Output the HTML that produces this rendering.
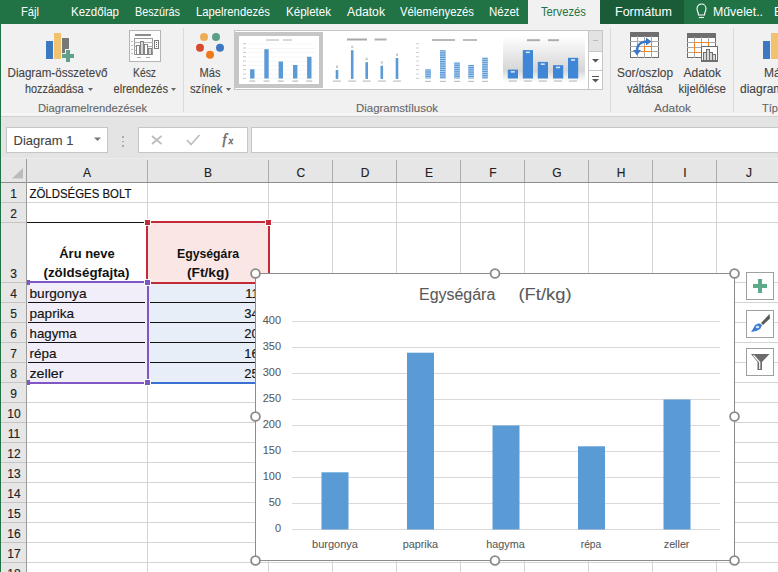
<!DOCTYPE html>
<html><head><meta charset="utf-8">
<style>
html,body{margin:0;padding:0;width:778px;height:572px;overflow:hidden;background:#fff}
svg{display:block;font-family:"Liberation Sans",sans-serif}
</style></head><body>
<svg width="778" height="572" viewBox="0 0 778 572" shape-rendering="crispEdges">
<rect x="0" y="0" width="778" height="24" fill="#217346"/>
<rect x="528" y="0" width="72" height="24" fill="#f1f1f1"/>
<rect x="600" y="0" width="84" height="24" fill="#1a5c37"/>
<text x="21" y="16" font-size="12" fill="#fff" textLength="18" lengthAdjust="spacingAndGlyphs">Fájl</text>
<text x="71" y="16" font-size="12" fill="#fff" textLength="48" lengthAdjust="spacingAndGlyphs">Kezdőlap</text>
<text x="135" y="16" font-size="12" fill="#fff" textLength="45" lengthAdjust="spacingAndGlyphs">Beszúrás</text>
<text x="196" y="16" font-size="12" fill="#fff" textLength="74" lengthAdjust="spacingAndGlyphs">Lapelrendezés</text>
<text x="286" y="16" font-size="12" fill="#fff" textLength="45" lengthAdjust="spacingAndGlyphs">Képletek</text>
<text x="347" y="16" font-size="12" fill="#fff" textLength="38" lengthAdjust="spacingAndGlyphs">Adatok</text>
<text x="400" y="16" font-size="12" fill="#fff" textLength="74" lengthAdjust="spacingAndGlyphs">Véleményezés</text>
<text x="489" y="16" font-size="12" fill="#fff" textLength="30" lengthAdjust="spacingAndGlyphs">Nézet</text>
<text x="615" y="16" font-size="12" fill="#fff" textLength="57" lengthAdjust="spacingAndGlyphs">Formátum</text>
<text x="713" y="16" font-size="12" fill="#fff" textLength="50" lengthAdjust="spacingAndGlyphs">Művelet..</text>
<text x="774" y="16" font-size="12" fill="#fff">B</text>
<text x="541" y="16" font-size="12" fill="#217346" textLength="45" lengthAdjust="spacingAndGlyphs">Tervezés</text>
<g fill="none" stroke="#fff" stroke-width="1.1" shape-rendering="geometricPrecision"><path d="M698.5,15 C698.5,12 697,11 697,8.5 A4.5,4.5 0 0 1 706,8.5 C706,11 704.5,12 704.5,15 Z"/><path d="M699,17.5 H704"/></g>
<rect x="0" y="24" width="778" height="92" fill="#f1f1f1"/>
<rect x="0" y="113" width="778" height="2" fill="#f6f6f6"/>
<rect x="183" y="28" width="1" height="84" fill="#dadada"/>
<rect x="610" y="28" width="1" height="84" fill="#dadada"/>
<rect x="733" y="28" width="1" height="84" fill="#dadada"/>
<rect x="46" y="41" width="7" height="18" fill="#3d79c2"/>
<rect x="54" y="33" width="7" height="26" fill="#f2c36f"/>
<rect x="62" y="38" width="7" height="15" fill="#787878"/>
<path d="M65,49 h5 v4 h4 v5 h-4 v4 h-5 v-4 h-4 v-5 h4 z" fill="#f1f1f1"/>
<path d="M66,50 h4 v4 h4 v4 h-4 v4 h-4 v-4 h-4 v-4 h4 z" fill="#62a189"/>
<text x="7.5" y="76.5" font-size="12" fill="#444" textLength="100" lengthAdjust="spacingAndGlyphs" stroke="#444" stroke-width="0.1">Diagram-összetevő</text>
<text x="25" y="92.5" font-size="12" fill="#444" textLength="58.5" lengthAdjust="spacingAndGlyphs" stroke="#444" stroke-width="0.1">hozzáadása</text>
<path d="M88,88 h5 l-2.5,3 z" fill="#666" shape-rendering="geometricPrecision"/>
<text x="38" y="112" font-size="11" fill="#666" textLength="109" lengthAdjust="spacingAndGlyphs" stroke="#666" stroke-width="0.1">Diagramelrendezések</text>
<g shape-rendering="crispEdges">
<rect x="129.5" y="30.5" width="31" height="31" fill="#fdfdfd" stroke="#b4b4b4"/>
<rect x="135" y="34" width="16" height="2" fill="#8c8c8c"/>
<rect x="134.5" y="38.5" width="18" height="16" fill="none" stroke="#9a9a9a"/>
<line x1="134" y1="42.5" x2="153" y2="42.5" stroke="#b0b0b0"/>
<line x1="134" y1="46.5" x2="153" y2="46.5" stroke="#b0b0b0"/>
<line x1="134" y1="50.5" x2="153" y2="50.5" stroke="#b0b0b0"/>
<rect x="136.5" y="45.5" width="3" height="9" fill="#fff" stroke="#858585"/>
<rect x="140.0" y="41.5" width="3" height="13" fill="#d6d6d6" stroke="#858585"/>
<rect x="144.5" y="44.5" width="3" height="10" fill="#fff" stroke="#858585"/>
<rect x="148.5" y="48.5" width="3" height="6" fill="#d6d6d6" stroke="#858585"/>
<rect x="154.5" y="40.5" width="4" height="8" fill="#fff" stroke="#7a7a7a"/>
<rect x="156" y="42" width="1" height="1" fill="#666"/>
<rect x="156" y="44" width="1" height="1" fill="#666"/>
<rect x="156" y="46" width="1" height="1" fill="#666"/>
<rect x="131" y="41" width="2" height="1" fill="#bbb"/>
<rect x="131" y="45" width="2" height="1" fill="#bbb"/>
<rect x="131" y="49" width="2" height="1" fill="#bbb"/>
<rect x="131" y="53" width="2" height="1" fill="#bbb"/>
<rect x="137" y="57" width="4" height="1" fill="#aaa"/><rect x="146" y="57" width="4" height="1" fill="#aaa"/>
</g>
<text x="133" y="76.5" font-size="12" fill="#444" textLength="23" lengthAdjust="spacingAndGlyphs" stroke="#444" stroke-width="0.1">Kész</text>
<text x="113.5" y="92.5" font-size="12" fill="#444" textLength="54.5" lengthAdjust="spacingAndGlyphs" stroke="#444" stroke-width="0.1">elrendezés</text>
<path d="M171,88 h5 l-2.5,3 z" fill="#666" shape-rendering="geometricPrecision"/>
<g shape-rendering="geometricPrecision">
<circle cx="204" cy="37" r="4" fill="#efae55"/>
<circle cx="216" cy="37" r="4" fill="#5b9e86"/>
<circle cx="200" cy="47.7" r="4" fill="#d74a2b"/>
<circle cx="220" cy="47.7" r="4" fill="#3d78c2"/>
<circle cx="210" cy="54.7" r="4" fill="#ef7a1c"/>
</g>
<text x="199.5" y="76.5" font-size="12" fill="#444" textLength="21" lengthAdjust="spacingAndGlyphs" stroke="#444" stroke-width="0.1">Más</text>
<text x="190" y="92.5" font-size="12" fill="#444" textLength="32.5" lengthAdjust="spacingAndGlyphs" stroke="#444" stroke-width="0.1">színek</text>
<path d="M226,88 h5 l-2.5,3 z" fill="#666" shape-rendering="geometricPrecision"/>
<text x="356" y="112" font-size="11" fill="#666" textLength="82" lengthAdjust="spacingAndGlyphs" stroke="#666" stroke-width="0.1">Diagramstílusok</text>
<rect x="234.5" y="30.5" width="368" height="59" fill="#fff" stroke="#c6c6c6"/>
<rect x="235" y="32" width="88" height="56" fill="#c6c6c6"/>
<rect x="239" y="36" width="80" height="48" fill="#fff"/>
<g shape-rendering="geometricPrecision">
<rect x="266" y="39.2" width="13" height="1.6" fill="#cfcfcf"/><rect x="283" y="39.2" width="9" height="1.6" fill="#cfcfcf"/>
<rect x="248" y="78.5" width="66" height="0.4" fill="#e8e8e8"/>
<rect x="243" y="77.9" width="3" height="1" fill="#c8c8c8"/>
<rect x="248" y="74.2" width="66" height="0.4" fill="#e8e8e8"/>
<rect x="243" y="73.6" width="3" height="1" fill="#c8c8c8"/>
<rect x="248" y="69.8" width="66" height="0.4" fill="#e8e8e8"/>
<rect x="243" y="69.2" width="3" height="1" fill="#c8c8c8"/>
<rect x="248" y="65.5" width="66" height="0.4" fill="#e8e8e8"/>
<rect x="243" y="64.9" width="3" height="1" fill="#c8c8c8"/>
<rect x="248" y="61.1" width="66" height="0.4" fill="#e8e8e8"/>
<rect x="243" y="60.5" width="3" height="1" fill="#c8c8c8"/>
<rect x="248" y="56.8" width="66" height="0.4" fill="#e8e8e8"/>
<rect x="243" y="56.2" width="3" height="1" fill="#c8c8c8"/>
<rect x="248" y="52.5" width="66" height="0.4" fill="#e8e8e8"/>
<rect x="243" y="51.9" width="3" height="1" fill="#c8c8c8"/>
<rect x="248" y="48.1" width="66" height="0.4" fill="#e8e8e8"/>
<rect x="243" y="47.5" width="3" height="1" fill="#c8c8c8"/>
<rect x="248" y="43.8" width="66" height="0.4" fill="#e8e8e8"/>
<rect x="243" y="43.2" width="3" height="1" fill="#c8c8c8"/>
<rect x="250.1" y="69.3" width="4.4" height="9.2" fill="#5b9bd5"/>
<rect x="249.3" y="80.5" width="6" height="1.2" fill="#bdbdbd"/>
<rect x="264.3" y="49.2" width="4.4" height="29.3" fill="#5b9bd5"/>
<rect x="263.5" y="80.5" width="6" height="1.2" fill="#bdbdbd"/>
<rect x="278.6" y="61.5" width="4.4" height="17.0" fill="#5b9bd5"/>
<rect x="277.8" y="80.5" width="6" height="1.2" fill="#bdbdbd"/>
<rect x="293.0" y="65" width="4.4" height="13.5" fill="#5b9bd5"/>
<rect x="292.2" y="80.5" width="6" height="1.2" fill="#bdbdbd"/>
<rect x="307.1" y="56.8" width="4.4" height="21.7" fill="#5b9bd5"/>
<rect x="306.3" y="80.5" width="6" height="1.2" fill="#bdbdbd"/>
<rect x="347" y="38.5" width="20" height="2" fill="#a8a8a8"/><rect x="374.5" y="38.5" width="12" height="2" fill="#b0b0b0"/>
<rect x="335.7" y="70" width="2.6" height="8.9" fill="#5b9bd5"/>
<rect x="336.0" y="65.5" width="2" height="2.5" fill="#c8c8c8"/>
<rect x="333.0" y="80.5" width="8" height="1.2" fill="#c0c0c0"/>
<rect x="350.9" y="50.2" width="2.6" height="28.7" fill="#5b9bd5"/>
<rect x="351.2" y="45.7" width="2" height="2.5" fill="#c8c8c8"/>
<rect x="348.2" y="80.5" width="8" height="1.2" fill="#c0c0c0"/>
<rect x="365.4" y="62.2" width="2.6" height="16.7" fill="#5b9bd5"/>
<rect x="365.7" y="57.7" width="2" height="2.5" fill="#c8c8c8"/>
<rect x="362.7" y="80.5" width="8" height="1.2" fill="#c0c0c0"/>
<rect x="380.5" y="65.7" width="2.6" height="13.2" fill="#5b9bd5"/>
<rect x="380.8" y="61.2" width="2" height="2.5" fill="#c8c8c8"/>
<rect x="377.8" y="80.5" width="8" height="1.2" fill="#c0c0c0"/>
<rect x="395.7" y="58" width="2.6" height="20.9" fill="#5b9bd5"/>
<rect x="396.0" y="53.5" width="2" height="2.5" fill="#c8c8c8"/>
<rect x="393.0" y="80.5" width="8" height="1.2" fill="#c0c0c0"/>
<rect x="432" y="39" width="23" height="2" fill="#b8b8b8"/><rect x="463" y="39" width="14" height="2" fill="#bcbcbc"/>
<rect x="416" y="77.9" width="3" height="1" fill="#cfcfcf"/>
<rect x="416" y="73.6" width="3" height="1" fill="#cfcfcf"/>
<rect x="416" y="69.2" width="3" height="1" fill="#cfcfcf"/>
<rect x="416" y="64.9" width="3" height="1" fill="#cfcfcf"/>
<rect x="416" y="60.5" width="3" height="1" fill="#cfcfcf"/>
<rect x="416" y="56.2" width="3" height="1" fill="#cfcfcf"/>
<rect x="416" y="51.9" width="3" height="1" fill="#cfcfcf"/>
<rect x="416" y="47.5" width="3" height="1" fill="#cfcfcf"/>
<rect x="416" y="43.2" width="3" height="1" fill="#cfcfcf"/>
<rect x="425.3" y="69.3" width="5.6" height="9.2" fill="#5b9bd5"/>
<rect x="425.3" y="70.5" width="5.6" height="0.8" fill="#c5dcf2"/>
<rect x="425.3" y="72.7" width="5.6" height="0.8" fill="#c5dcf2"/>
<rect x="425.3" y="74.9" width="5.6" height="0.8" fill="#c5dcf2"/>
<rect x="425.3" y="77.1" width="5.6" height="0.8" fill="#c5dcf2"/>
<rect x="425.1" y="80.8" width="6" height="1.2" fill="#c0c0c0"/>
<rect x="440.0" y="50.2" width="5.6" height="28.3" fill="#5b9bd5"/>
<rect x="440.0" y="51.4" width="5.6" height="0.8" fill="#c5dcf2"/>
<rect x="440.0" y="53.6" width="5.6" height="0.8" fill="#c5dcf2"/>
<rect x="440.0" y="55.8" width="5.6" height="0.8" fill="#c5dcf2"/>
<rect x="440.0" y="58.0" width="5.6" height="0.8" fill="#c5dcf2"/>
<rect x="440.0" y="60.2" width="5.6" height="0.8" fill="#c5dcf2"/>
<rect x="440.0" y="62.4" width="5.6" height="0.8" fill="#c5dcf2"/>
<rect x="440.0" y="64.6" width="5.6" height="0.8" fill="#c5dcf2"/>
<rect x="440.0" y="66.8" width="5.6" height="0.8" fill="#c5dcf2"/>
<rect x="440.0" y="69.0" width="5.6" height="0.8" fill="#c5dcf2"/>
<rect x="440.0" y="71.2" width="5.6" height="0.8" fill="#c5dcf2"/>
<rect x="440.0" y="73.4" width="5.6" height="0.8" fill="#c5dcf2"/>
<rect x="440.0" y="75.6" width="5.6" height="0.8" fill="#c5dcf2"/>
<rect x="440.0" y="77.8" width="5.6" height="0.8" fill="#c5dcf2"/>
<rect x="439.8" y="80.8" width="6" height="1.2" fill="#c0c0c0"/>
<rect x="454.2" y="62.5" width="5.6" height="16.0" fill="#5b9bd5"/>
<rect x="454.2" y="63.7" width="5.6" height="0.8" fill="#c5dcf2"/>
<rect x="454.2" y="65.9" width="5.6" height="0.8" fill="#c5dcf2"/>
<rect x="454.2" y="68.1" width="5.6" height="0.8" fill="#c5dcf2"/>
<rect x="454.2" y="70.3" width="5.6" height="0.8" fill="#c5dcf2"/>
<rect x="454.2" y="72.5" width="5.6" height="0.8" fill="#c5dcf2"/>
<rect x="454.2" y="74.7" width="5.6" height="0.8" fill="#c5dcf2"/>
<rect x="454.2" y="76.9" width="5.6" height="0.8" fill="#c5dcf2"/>
<rect x="454.0" y="80.8" width="6" height="1.2" fill="#c0c0c0"/>
<rect x="468.3" y="65" width="5.6" height="13.5" fill="#5b9bd5"/>
<rect x="468.3" y="66.2" width="5.6" height="0.8" fill="#c5dcf2"/>
<rect x="468.3" y="68.4" width="5.6" height="0.8" fill="#c5dcf2"/>
<rect x="468.3" y="70.6" width="5.6" height="0.8" fill="#c5dcf2"/>
<rect x="468.3" y="72.8" width="5.6" height="0.8" fill="#c5dcf2"/>
<rect x="468.3" y="75.0" width="5.6" height="0.8" fill="#c5dcf2"/>
<rect x="468.3" y="77.2" width="5.6" height="0.8" fill="#c5dcf2"/>
<rect x="468.1" y="80.8" width="6" height="1.2" fill="#c0c0c0"/>
<rect x="482.2" y="57.7" width="5.6" height="20.8" fill="#5b9bd5"/>
<rect x="482.2" y="58.9" width="5.6" height="0.8" fill="#c5dcf2"/>
<rect x="482.2" y="61.1" width="5.6" height="0.8" fill="#c5dcf2"/>
<rect x="482.2" y="63.3" width="5.6" height="0.8" fill="#c5dcf2"/>
<rect x="482.2" y="65.5" width="5.6" height="0.8" fill="#c5dcf2"/>
<rect x="482.2" y="67.7" width="5.6" height="0.8" fill="#c5dcf2"/>
<rect x="482.2" y="69.9" width="5.6" height="0.8" fill="#c5dcf2"/>
<rect x="482.2" y="72.1" width="5.6" height="0.8" fill="#c5dcf2"/>
<rect x="482.2" y="74.3" width="5.6" height="0.8" fill="#c5dcf2"/>
<rect x="482.2" y="76.5" width="5.6" height="0.8" fill="#c5dcf2"/>
<rect x="482.0" y="80.8" width="6" height="1.2" fill="#c0c0c0"/>
<defs><linearGradient id="g4" x1="0" y1="0" x2="0" y2="1"><stop offset="0" stop-color="#fff"/><stop offset="0.75" stop-color="#d6d6d6"/><stop offset="0.88" stop-color="#ececec"/><stop offset="1" stop-color="#fff"/></linearGradient></defs>
<rect x="503" y="36" width="82" height="46" fill="url(#g4)"/>
<rect x="527" y="39.2" width="13" height="2" fill="#adadad"/><rect x="548" y="39.2" width="11" height="2" fill="#adadad"/>
<rect x="507.8" y="69.6" width="10.2" height="8.9" fill="#3f86d6"/>
<rect x="510.8" y="71.1" width="4" height="1.5" fill="#dfeaf7"/>
<rect x="508.8" y="80.5" width="8" height="1.1" fill="#b8b8b8"/>
<rect x="522.8" y="50.1" width="10.2" height="28.4" fill="#3f86d6"/>
<rect x="525.8" y="51.6" width="4" height="1.5" fill="#dfeaf7"/>
<rect x="523.8" y="80.5" width="8" height="1.1" fill="#b8b8b8"/>
<rect x="537.8" y="61.9" width="10.2" height="16.6" fill="#3f86d6"/>
<rect x="540.8" y="63.4" width="4" height="1.5" fill="#dfeaf7"/>
<rect x="538.8" y="80.5" width="8" height="1.1" fill="#b8b8b8"/>
<rect x="553" y="65.2" width="10.2" height="13.3" fill="#3f86d6"/>
<rect x="556.0" y="66.7" width="4" height="1.5" fill="#dfeaf7"/>
<rect x="554.0" y="80.5" width="8" height="1.1" fill="#b8b8b8"/>
<rect x="568" y="57.8" width="10.2" height="20.7" fill="#3f86d6"/>
<rect x="571.0" y="59.3" width="4" height="1.5" fill="#dfeaf7"/>
<rect x="569.0" y="80.5" width="8" height="1.1" fill="#b8b8b8"/>
</g>
<rect x="588.5" y="30.5" width="14" height="59" fill="#fff" stroke="#c6c6c6"/>
<rect x="589" y="31" width="13" height="20" fill="#e3e3e3"/>
<line x1="588" y1="51.5" x2="603" y2="51.5" stroke="#c6c6c6"/>
<line x1="588" y1="70.5" x2="603" y2="70.5" stroke="#c6c6c6"/>
<g shape-rendering="geometricPrecision">
<path d="M593,40.5 h5" stroke="#bbb" stroke-width="1"/>
<path d="M592,59 h7 l-3.5,3.5 z" fill="#555"/>
<path d="M592,76.5 h7" stroke="#555" stroke-width="1"/><path d="M592,79 h7 l-3.5,3.5 z" fill="#555"/>
</g>
<g shape-rendering="crispEdges">
<rect x="630.5" y="32.5" width="28" height="25" fill="#fff" stroke="#6e6e6e"/>
<rect x="630" y="32" width="29" height="4.5" fill="#6e6e6e"/>
<rect x="637" y="36" width="1" height="22" fill="#a9a9a9"/>
<rect x="644" y="36" width="1" height="22" fill="#a9a9a9"/>
<rect x="651" y="36" width="1" height="22" fill="#a9a9a9"/>
<rect x="630" y="41" width="29" height="1" fill="#a9a9a9"/>
<rect x="630" y="46" width="29" height="1" fill="#a9a9a9"/>
<rect x="630" y="51" width="29" height="1" fill="#a9a9a9"/>
<path d="M640.5,51.5 H651.5 V41.5 H647 M644.5,51.5 V46.5 H651.5" fill="none" stroke="#f08429" stroke-width="1.2"/>
</g>
<g shape-rendering="geometricPrecision" fill="none" stroke="#3b78c6" stroke-width="2.3" stroke-linecap="butt">
<path d="M637,51 C636.5,45 641,41.5 647.5,41.5"/>
</g>
<path d="M646,37.5 L651.5,41.5 L646,45.5 Z" fill="#3b78c6" shape-rendering="geometricPrecision"/>
<path d="M633,50 L637,55.5 L641,50 Z" fill="#3b78c6" shape-rendering="geometricPrecision"/>
<g shape-rendering="crispEdges">
<rect x="687.5" y="33.5" width="28" height="24" fill="#fff" stroke="#6e6e6e"/>
<rect x="687" y="33" width="29" height="4.5" fill="#6e6e6e"/>
<rect x="694" y="37" width="1" height="21" fill="#a9a9a9"/>
<rect x="701" y="37" width="1" height="21" fill="#a9a9a9"/>
<rect x="708" y="37" width="1" height="21" fill="#a9a9a9"/>
<rect x="687" y="42" width="29" height="1" fill="#a9a9a9"/>
<rect x="687" y="47" width="29" height="1" fill="#a9a9a9"/>
<rect x="687" y="52" width="29" height="1" fill="#a9a9a9"/>
<path d="M694.5,52.5 V42.5 H708.5 V46 M694.5,52.5 H701" fill="none" stroke="#f08429" stroke-width="1.2"/>
<rect x="701.5" y="46.5" width="16" height="14.5" fill="#fff" stroke="#6e6e6e" stroke-width="1.2"/>
<rect x="703.5" y="52.5" width="3" height="8.0" fill="#d8d8d8" stroke="#6e6e6e"/>
<rect x="706.5" y="49.5" width="3" height="11.0" fill="#d8d8d8" stroke="#6e6e6e"/>
<rect x="709.5" y="52.5" width="3" height="8.0" fill="#d8d8d8" stroke="#6e6e6e"/>
<rect x="712.5" y="54.5" width="3" height="6.0" fill="#d8d8d8" stroke="#6e6e6e"/>
</g>
<text x="617" y="76.5" font-size="12" fill="#444" textLength="56" lengthAdjust="spacingAndGlyphs" stroke="#444" stroke-width="0.1">Sor/oszlop</text>
<text x="627" y="92.5" font-size="12" fill="#444" textLength="35.5" lengthAdjust="spacingAndGlyphs" stroke="#444" stroke-width="0.1">váltása</text>
<text x="683.5" y="76.5" font-size="12" fill="#444" textLength="37.5" lengthAdjust="spacingAndGlyphs" stroke="#444" stroke-width="0.1">Adatok</text>
<text x="678.5" y="92.5" font-size="12" fill="#444" textLength="47.5" lengthAdjust="spacingAndGlyphs" stroke="#444" stroke-width="0.1">kijelölése</text>
<text x="654" y="112" font-size="11" fill="#666" textLength="37" lengthAdjust="spacingAndGlyphs" stroke="#666" stroke-width="0.1">Adatok</text>
<text x="764" y="76.5" font-size="12" fill="#444" stroke="#444" stroke-width="0.1">Má</text>
<text x="740" y="92.5" font-size="12" fill="#444" stroke="#444" stroke-width="0.1">diagram</text>
<text x="762" y="112" font-size="11" fill="#666" stroke="#666" stroke-width="0.1">Típ</text>
<rect x="763" y="41" width="7" height="18" fill="#3d79c2"/>
<rect x="771" y="33" width="7" height="26" fill="#f2c36f"/>
<rect x="0" y="116" width="778" height="44" fill="#e4e4e4"/>
<rect x="0" y="116" width="778" height="1" fill="#d2d2d2"/>
<rect x="6.5" y="127.5" width="101" height="25" fill="#fff" stroke="#c6c6c6"/>
<text x="13.5" y="145" font-size="13" fill="#444" textLength="60" lengthAdjust="spacingAndGlyphs" stroke="#444" stroke-width="0.1">Diagram 1</text>
<path d="M94,137.5 h7 l-3.5,3.5 z" fill="#777" shape-rendering="geometricPrecision"/>
<rect x="122" y="136.0" width="1.5" height="1.5" fill="#aaa"/>
<rect x="122" y="140.5" width="1.5" height="1.5" fill="#aaa"/>
<rect x="122" y="145.0" width="1.5" height="1.5" fill="#aaa"/>
<rect x="138.5" y="127.5" width="109" height="25" fill="#fff" stroke="#c6c6c6"/>
<g shape-rendering="geometricPrecision" stroke="#bdbdbd" stroke-width="1.7" fill="none"><path d="M152,136 l9.5,8 M161.5,136 l-9.5,8"/><path d="M187,140 l4,4.5 l8.5,-9.5"/></g>
<text x="222.5" y="143.5" font-size="14" fill="#6a6a6a" font-family="Liberation Serif" font-style="italic" stroke="#6a6a6a" stroke-width="0.5">f</text>
<text x="228.5" y="144" font-size="10.5" fill="#6a6a6a" font-family="Liberation Serif" font-style="italic" stroke="#6a6a6a" stroke-width="0.4">x</text>
<rect x="251.5" y="127.5" width="530" height="25" fill="#fff" stroke="#c6c6c6"/>
<rect x="0" y="160" width="778" height="412" fill="#fff"/>
<rect x="0" y="159" width="778" height="23" fill="#e6e6e6"/>
<rect x="0" y="159" width="27" height="413" fill="#e6e6e6"/>
<rect x="147" y="182" width="1" height="390" fill="#d4d4d4"/>
<rect x="147" y="160" width="1" height="22" fill="#ababab"/>
<rect x="268" y="182" width="1" height="390" fill="#d4d4d4"/>
<rect x="268" y="160" width="1" height="22" fill="#ababab"/>
<rect x="332" y="182" width="1" height="390" fill="#d4d4d4"/>
<rect x="332" y="160" width="1" height="22" fill="#ababab"/>
<rect x="396" y="182" width="1" height="390" fill="#d4d4d4"/>
<rect x="396" y="160" width="1" height="22" fill="#ababab"/>
<rect x="460" y="182" width="1" height="390" fill="#d4d4d4"/>
<rect x="460" y="160" width="1" height="22" fill="#ababab"/>
<rect x="524" y="182" width="1" height="390" fill="#d4d4d4"/>
<rect x="524" y="160" width="1" height="22" fill="#ababab"/>
<rect x="588" y="182" width="1" height="390" fill="#d4d4d4"/>
<rect x="588" y="160" width="1" height="22" fill="#ababab"/>
<rect x="652" y="182" width="1" height="390" fill="#d4d4d4"/>
<rect x="652" y="160" width="1" height="22" fill="#ababab"/>
<rect x="716" y="182" width="1" height="390" fill="#d4d4d4"/>
<rect x="716" y="160" width="1" height="22" fill="#ababab"/>
<rect x="781" y="182" width="1" height="390" fill="#d4d4d4"/>
<rect x="781" y="160" width="1" height="22" fill="#ababab"/>
<rect x="27" y="202" width="751" height="1" fill="#d4d4d4"/>
<rect x="0" y="202" width="27" height="1" fill="#c4c4c4"/>
<rect x="27" y="222" width="751" height="1" fill="#d4d4d4"/>
<rect x="0" y="222" width="27" height="1" fill="#c4c4c4"/>
<rect x="27" y="282" width="751" height="1" fill="#d4d4d4"/>
<rect x="0" y="282" width="27" height="1" fill="#c4c4c4"/>
<rect x="27" y="302" width="751" height="1" fill="#d4d4d4"/>
<rect x="0" y="302" width="27" height="1" fill="#c4c4c4"/>
<rect x="27" y="322" width="751" height="1" fill="#d4d4d4"/>
<rect x="0" y="322" width="27" height="1" fill="#c4c4c4"/>
<rect x="27" y="342" width="751" height="1" fill="#d4d4d4"/>
<rect x="0" y="342" width="27" height="1" fill="#c4c4c4"/>
<rect x="27" y="362" width="751" height="1" fill="#d4d4d4"/>
<rect x="0" y="362" width="27" height="1" fill="#c4c4c4"/>
<rect x="27" y="382" width="751" height="1" fill="#d4d4d4"/>
<rect x="0" y="382" width="27" height="1" fill="#c4c4c4"/>
<rect x="27" y="402" width="751" height="1" fill="#d4d4d4"/>
<rect x="0" y="402" width="27" height="1" fill="#c4c4c4"/>
<rect x="27" y="422" width="751" height="1" fill="#d4d4d4"/>
<rect x="0" y="422" width="27" height="1" fill="#c4c4c4"/>
<rect x="27" y="442" width="751" height="1" fill="#d4d4d4"/>
<rect x="0" y="442" width="27" height="1" fill="#c4c4c4"/>
<rect x="27" y="462" width="751" height="1" fill="#d4d4d4"/>
<rect x="0" y="462" width="27" height="1" fill="#c4c4c4"/>
<rect x="27" y="482" width="751" height="1" fill="#d4d4d4"/>
<rect x="0" y="482" width="27" height="1" fill="#c4c4c4"/>
<rect x="27" y="502" width="751" height="1" fill="#d4d4d4"/>
<rect x="0" y="502" width="27" height="1" fill="#c4c4c4"/>
<rect x="27" y="522" width="751" height="1" fill="#d4d4d4"/>
<rect x="0" y="522" width="27" height="1" fill="#c4c4c4"/>
<rect x="27" y="542" width="751" height="1" fill="#d4d4d4"/>
<rect x="0" y="542" width="27" height="1" fill="#c4c4c4"/>
<rect x="27" y="562" width="751" height="1" fill="#d4d4d4"/>
<rect x="0" y="562" width="27" height="1" fill="#c4c4c4"/>
<rect x="0" y="182" width="778" height="1" fill="#8e8e8e"/>
<rect x="0" y="158" width="778" height="1" fill="#ececec"/>
<rect x="26" y="159" width="1" height="413" fill="#9b9b9b"/>
<path d="M23,168 V178.5 H12 Z" fill="#bcbcbc" shape-rendering="geometricPrecision"/>
<text x="87.0" y="176.5" font-size="12" fill="#222" text-anchor="middle" stroke="#222" stroke-width="0.15">A</text>
<text x="208.0" y="176.5" font-size="12" fill="#222" text-anchor="middle" stroke="#222" stroke-width="0.15">B</text>
<text x="300.75" y="176.5" font-size="12" fill="#222" text-anchor="middle" stroke="#222" stroke-width="0.15">C</text>
<text x="365.0" y="176.5" font-size="12" fill="#222" text-anchor="middle" stroke="#222" stroke-width="0.15">D</text>
<text x="429.0" y="176.5" font-size="12" fill="#222" text-anchor="middle" stroke="#222" stroke-width="0.15">E</text>
<text x="493.0" y="176.5" font-size="12" fill="#222" text-anchor="middle" stroke="#222" stroke-width="0.15">F</text>
<text x="557.0" y="176.5" font-size="12" fill="#222" text-anchor="middle" stroke="#222" stroke-width="0.15">G</text>
<text x="621.0" y="176.5" font-size="12" fill="#222" text-anchor="middle" stroke="#222" stroke-width="0.15">H</text>
<text x="685.0" y="176.5" font-size="12" fill="#222" text-anchor="middle" stroke="#222" stroke-width="0.15">I</text>
<text x="749" y="176.5" font-size="12" fill="#222" text-anchor="middle" stroke="#222" stroke-width="0.15">J</text>
<text x="13.5" y="197.5" font-size="12" fill="#222" text-anchor="middle" stroke="#222" stroke-width="0.15">1</text>
<text x="13.5" y="217.5" font-size="12" fill="#222" text-anchor="middle" stroke="#222" stroke-width="0.15">2</text>
<text x="13.5" y="277.5" font-size="12" fill="#222" text-anchor="middle" stroke="#222" stroke-width="0.15">3</text>
<text x="13.5" y="297.5" font-size="12" fill="#222" text-anchor="middle" stroke="#222" stroke-width="0.15">4</text>
<text x="13.5" y="317.5" font-size="12" fill="#222" text-anchor="middle" stroke="#222" stroke-width="0.15">5</text>
<text x="13.5" y="337.5" font-size="12" fill="#222" text-anchor="middle" stroke="#222" stroke-width="0.15">6</text>
<text x="13.5" y="357.5" font-size="12" fill="#222" text-anchor="middle" stroke="#222" stroke-width="0.15">7</text>
<text x="13.5" y="377.5" font-size="12" fill="#222" text-anchor="middle" stroke="#222" stroke-width="0.15">8</text>
<text x="13.5" y="397.5" font-size="12" fill="#222" text-anchor="middle" stroke="#222" stroke-width="0.15">9</text>
<text x="14" y="417.5" font-size="12" fill="#222" text-anchor="middle" stroke="#222" stroke-width="0.15">10</text>
<text x="14" y="437.5" font-size="12" fill="#222" text-anchor="middle" stroke="#222" stroke-width="0.15">11</text>
<text x="14" y="457.5" font-size="12" fill="#222" text-anchor="middle" stroke="#222" stroke-width="0.15">12</text>
<text x="14" y="477.5" font-size="12" fill="#222" text-anchor="middle" stroke="#222" stroke-width="0.15">13</text>
<text x="14" y="497.5" font-size="12" fill="#222" text-anchor="middle" stroke="#222" stroke-width="0.15">14</text>
<text x="14" y="517.5" font-size="12" fill="#222" text-anchor="middle" stroke="#222" stroke-width="0.15">15</text>
<text x="14" y="537.5" font-size="12" fill="#222" text-anchor="middle" stroke="#222" stroke-width="0.15">16</text>
<text x="14" y="557.5" font-size="12" fill="#222" text-anchor="middle" stroke="#222" stroke-width="0.15">17</text>
<text x="14" y="577.5" font-size="12" fill="#222" text-anchor="middle" stroke="#222" stroke-width="0.15">18</text>
<rect x="27" y="283" width="120" height="100" fill="#f1eef9"/>
<rect x="148" y="283" width="120" height="100" fill="#e8eef8"/>
<rect x="148" y="223" width="120" height="60" fill="#fbe6e6"/>
<rect x="27" y="222" width="117" height="1" fill="#111"/>
<rect x="28" y="302" width="117" height="1" fill="#111"/>
<rect x="150" y="302" width="120" height="1" fill="#111"/>
<rect x="28" y="322" width="117" height="1" fill="#111"/>
<rect x="150" y="322" width="120" height="1" fill="#111"/>
<rect x="28" y="342" width="117" height="1" fill="#111"/>
<rect x="150" y="342" width="120" height="1" fill="#111"/>
<rect x="28" y="362" width="117" height="1" fill="#111"/>
<rect x="150" y="362" width="120" height="1" fill="#111"/>
<rect x="151" y="221" width="114" height="2" fill="#c42b36"/>
<rect x="146" y="226" width="2" height="53" fill="#c42b36"/>
<rect x="268" y="226" width="2" height="53" fill="#c42b36"/>
<rect x="151" y="282" width="120" height="2" fill="#c42b36"/>
<rect x="30" y="281" width="114" height="2" fill="#7f57c4"/>
<rect x="30" y="382" width="114" height="2" fill="#7f57c4"/>
<rect x="147" y="286" width="2" height="93" fill="#7f57c4"/>
<rect x="151" y="382" width="120" height="2" fill="#3b6fd1"/>
<rect x="144" y="219" width="7" height="7" fill="#fff"/>
<rect x="145" y="220" width="5" height="5" fill="#c42b36"/>
<rect x="265" y="219" width="7" height="7" fill="#fff"/>
<rect x="266" y="220" width="5" height="5" fill="#c42b36"/>
<rect x="144" y="279" width="7" height="7" fill="#fff"/>
<rect x="145" y="280" width="5" height="5" fill="#7f57c4"/>
<rect x="144" y="379" width="7" height="7" fill="#fff"/>
<rect x="145" y="380" width="5" height="5" fill="#7f57c4"/>
<rect x="27" y="280" width="3" height="5" fill="#7f57c4"/>
<rect x="27" y="380" width="3" height="5" fill="#7f57c4"/>
<text x="29.5" y="197.5" font-size="13" fill="#111" textLength="102" lengthAdjust="spacingAndGlyphs" stroke="#111" stroke-width="0.15">ZÖLDSÉGES BOLT</text>
<text x="87" y="258" font-size="13" fill="#111" textLength="55.5" lengthAdjust="spacingAndGlyphs" text-anchor="middle" font-weight="bold">Áru neve</text>
<text x="86.5" y="277" font-size="13" fill="#111" textLength="86" lengthAdjust="spacingAndGlyphs" text-anchor="middle" font-weight="bold">(zöldségfajta)</text>
<text x="208" y="258" font-size="13" fill="#111" textLength="62" lengthAdjust="spacingAndGlyphs" text-anchor="middle" font-weight="bold">Egységára</text>
<text x="208" y="277" font-size="13" fill="#111" textLength="42" lengthAdjust="spacingAndGlyphs" text-anchor="middle" font-weight="bold">(Ft/kg)</text>
<text x="29.5" y="298" font-size="13" fill="#111" textLength="57" lengthAdjust="spacingAndGlyphs" stroke="#111" stroke-width="0.15">burgonya</text>
<text x="266" y="298" font-size="13" fill="#111" text-anchor="end" stroke="#111" stroke-width="0.15">110</text>
<text x="29.5" y="318" font-size="13" fill="#111" textLength="44.5" lengthAdjust="spacingAndGlyphs" stroke="#111" stroke-width="0.15">paprika</text>
<text x="266" y="318" font-size="13" fill="#111" text-anchor="end" stroke="#111" stroke-width="0.15">340</text>
<text x="29.5" y="338" font-size="13" fill="#111" textLength="47.2" lengthAdjust="spacingAndGlyphs" stroke="#111" stroke-width="0.15">hagyma</text>
<text x="266" y="338" font-size="13" fill="#111" text-anchor="end" stroke="#111" stroke-width="0.15">200</text>
<text x="29.5" y="358" font-size="13" fill="#111" textLength="27" lengthAdjust="spacingAndGlyphs" stroke="#111" stroke-width="0.15">répa</text>
<text x="266" y="358" font-size="13" fill="#111" text-anchor="end" stroke="#111" stroke-width="0.15">160</text>
<text x="29.5" y="378" font-size="13" fill="#111" textLength="34" lengthAdjust="spacingAndGlyphs" stroke="#111" stroke-width="0.15">zeller</text>
<text x="266" y="378" font-size="13" fill="#111" text-anchor="end" stroke="#111" stroke-width="0.15">250</text>
<rect x="255.5" y="273.5" width="479" height="287" fill="#fff" stroke="#8c8c8c"/>
<text x="419" y="300" font-size="16" fill="#595959" textLength="76.3" lengthAdjust="spacingAndGlyphs" stroke="#595959" stroke-width="0.08">Egységára</text>
<text x="518.5" y="300" font-size="16" fill="#595959" textLength="53" lengthAdjust="spacingAndGlyphs" stroke="#595959" stroke-width="0.08">(Ft/kg)</text>
<rect x="292" y="321" width="428" height="1" fill="#d9d9d9"/>
<text x="281" y="324" font-size="11" fill="#595959" text-anchor="end" stroke="#595959" stroke-width="0.08">400</text>
<rect x="292" y="347" width="428" height="1" fill="#d9d9d9"/>
<text x="281" y="350" font-size="11" fill="#595959" text-anchor="end" stroke="#595959" stroke-width="0.08">350</text>
<rect x="292" y="373" width="428" height="1" fill="#d9d9d9"/>
<text x="281" y="376" font-size="11" fill="#595959" text-anchor="end" stroke="#595959" stroke-width="0.08">300</text>
<rect x="292" y="399" width="428" height="1" fill="#d9d9d9"/>
<text x="281" y="402" font-size="11" fill="#595959" text-anchor="end" stroke="#595959" stroke-width="0.08">250</text>
<rect x="292" y="425" width="428" height="1" fill="#d9d9d9"/>
<text x="281" y="428" font-size="11" fill="#595959" text-anchor="end" stroke="#595959" stroke-width="0.08">200</text>
<rect x="292" y="451" width="428" height="1" fill="#d9d9d9"/>
<text x="281" y="454" font-size="11" fill="#595959" text-anchor="end" stroke="#595959" stroke-width="0.08">150</text>
<rect x="292" y="477" width="428" height="1" fill="#d9d9d9"/>
<text x="281" y="480" font-size="11" fill="#595959" text-anchor="end" stroke="#595959" stroke-width="0.08">100</text>
<rect x="292" y="503" width="428" height="1" fill="#d9d9d9"/>
<text x="281" y="506" font-size="11" fill="#595959" text-anchor="end" stroke="#595959" stroke-width="0.08">50</text>
<rect x="292" y="529" width="428" height="1" fill="#d9d9d9"/>
<text x="281" y="532" font-size="11" fill="#595959" text-anchor="end" stroke="#595959" stroke-width="0.08">0</text>
<rect x="321.5" y="472.3" width="27" height="57.2" fill="#5b9bd5" shape-rendering="geometricPrecision"/>
<text x="335" y="548" font-size="11" fill="#595959" textLength="46" lengthAdjust="spacingAndGlyphs" text-anchor="middle" stroke="#595959" stroke-width="0.08">burgonya</text>
<rect x="407.0" y="352.7" width="27" height="176.8" fill="#5b9bd5" shape-rendering="geometricPrecision"/>
<text x="420.4" y="548" font-size="11" fill="#595959" textLength="35.5" lengthAdjust="spacingAndGlyphs" text-anchor="middle" stroke="#595959" stroke-width="0.08">paprika</text>
<rect x="492.5" y="425.5" width="27" height="104.0" fill="#5b9bd5" shape-rendering="geometricPrecision"/>
<text x="505.5" y="548" font-size="11" fill="#595959" textLength="38.5" lengthAdjust="spacingAndGlyphs" text-anchor="middle" stroke="#595959" stroke-width="0.08">hagyma</text>
<rect x="578.0" y="446.3" width="27" height="83.2" fill="#5b9bd5" shape-rendering="geometricPrecision"/>
<text x="591" y="548" font-size="11" fill="#595959" textLength="20.4" lengthAdjust="spacingAndGlyphs" text-anchor="middle" stroke="#595959" stroke-width="0.08">répa</text>
<rect x="663.5" y="399.5" width="27" height="130.0" fill="#5b9bd5" shape-rendering="geometricPrecision"/>
<text x="676.6" y="548" font-size="11" fill="#595959" textLength="25.7" lengthAdjust="spacingAndGlyphs" text-anchor="middle" stroke="#595959" stroke-width="0.08">zeller</text>
<g shape-rendering="geometricPrecision" fill="#fff" stroke="#8a8a8a" stroke-width="1.8">
<circle cx="255.5" cy="273.5" r="4.4"/>
<circle cx="255.5" cy="416.5" r="4.4"/>
<circle cx="255.5" cy="560.5" r="4.4"/>
<circle cx="495" cy="273.5" r="4.4"/>
<circle cx="495" cy="560.5" r="4.4"/>
<circle cx="734.5" cy="273.5" r="4.4"/>
<circle cx="734.5" cy="416.5" r="4.4"/>
<circle cx="734.5" cy="560.5" r="4.4"/>
</g>
<rect x="746.5" y="272.5" width="27" height="27" fill="#fff" stroke="#a0a0a0"/>
<rect x="746.5" y="310.5" width="27" height="27" fill="#fff" stroke="#a0a0a0"/>
<rect x="746.5" y="348.5" width="27" height="27" fill="#fff" stroke="#a0a0a0"/>
<path d="M758,279 h4 v5 h5 v4 h-5 v5 h-4 v-5 h-5 v-4 h5 z" fill="#5ea98a"/>
<g shape-rendering="geometricPrecision"><path d="M769.5,314 L770,318.5 L763,325 L761,323 Z" fill="#5a5a5a"/><path d="M762,325 C760,322.5 756.5,323 754.5,326 C753.5,328 752.5,330 751,332 C754.5,331.5 758,331 760.5,328.5 Z" fill="#3d7ad0"/><ellipse cx="757.5" cy="327" rx="1.8" ry="1.2" fill="#cfe0f5"/></g>
<path d="M751,354 H769.5 L762,362 V370 H757.5 V362 Z" fill="#6b6b6b" shape-rendering="geometricPrecision"/>
<path d="M753.5,355.3 L759.7,362.2 V369" fill="none" stroke="#f4f4f4" stroke-width="1.3" shape-rendering="geometricPrecision"/>
<rect x="0" y="24" width="1" height="548" fill="#217346"/>
</svg></body></html>
